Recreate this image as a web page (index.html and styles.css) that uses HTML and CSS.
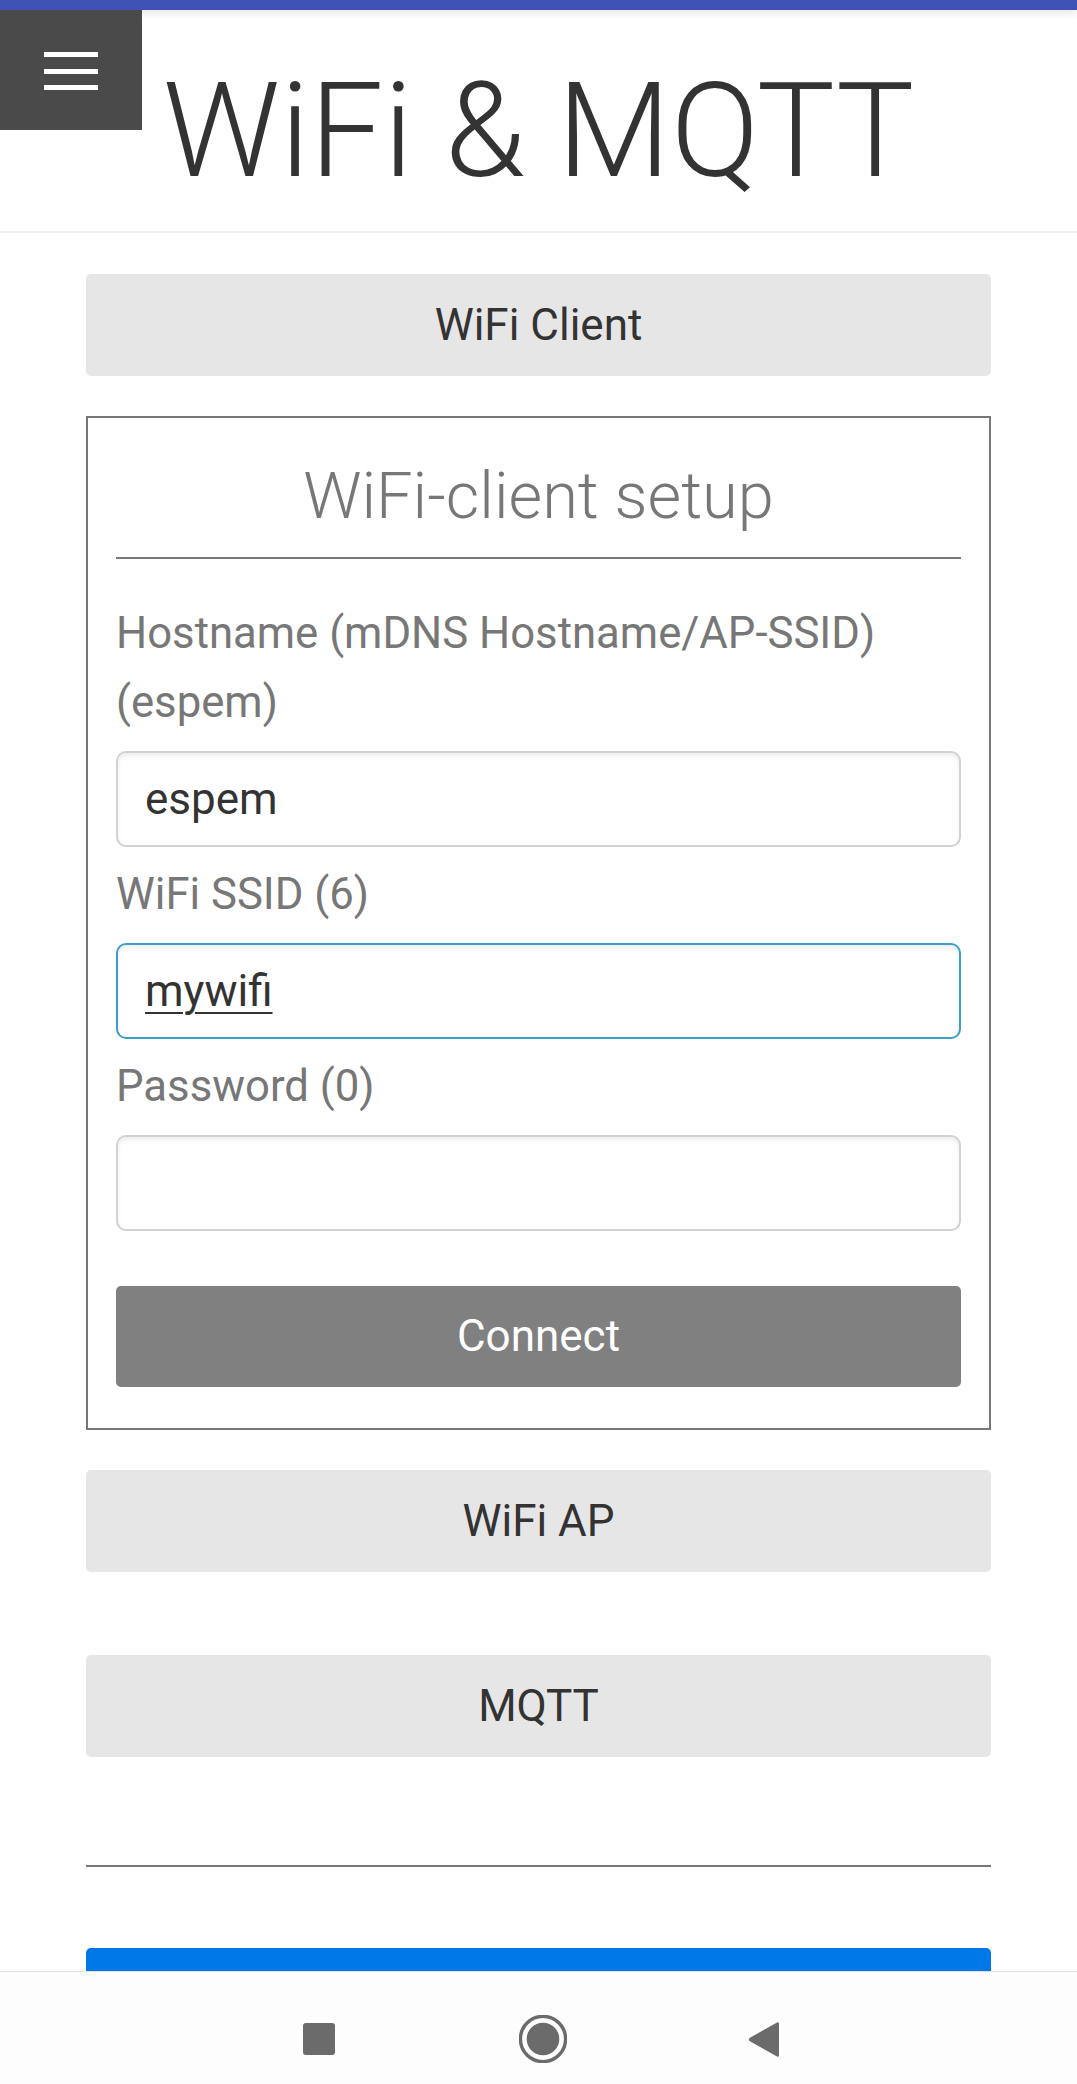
FILE: index.html
```html
<!DOCTYPE html>
<html lang="en">
<head>
<meta charset="utf-8">
<title>WiFi &amp; MQTT</title>
<link rel="stylesheet" href="styles.css">
</head>
<body>
<div class="topbar"></div>
<button class="menu" type="button" aria-label="Menu"><span></span><span></span><span></span></button>
<header class="header">
  <h1 class="title">WiFi &amp; MQTT</h1>
</header>
<main class="content">
  <button class="section-btn first" type="button">WiFi Client</button>
  <form class="panel">
    <h3 class="panel-title">WiFi-client setup</h3>
    <label class="field-label" for="host">Hostname (mDNS Hostname/AP-SSID) (espem)</label>
    <input class="field" id="host" type="text" value="espem">
    <label class="field-label" for="ssid">WiFi SSID (6)</label>
    <input class="field focused" id="ssid" type="text" value="mywifi">
    <label class="field-label" for="pass">Password (0)</label>
    <input class="field" id="pass" type="password" value="">
    <button class="connect" type="button">Connect</button>
  </form>
  <button class="section-btn gap-s" type="button">WiFi AP</button>
  <button class="section-btn gap-l" type="button">MQTT</button>
  <hr class="divider">
  <button class="primary-btn" type="button"></button>
</main>
<nav class="sysnav">
  <svg class="nav-icon" width="48" height="48" viewBox="0 0 48 48"><rect x="8" y="8" width="32" height="32" rx="3" fill="#6b6b6b"/></svg>
  <svg class="nav-icon" width="48" height="48" viewBox="0 0 48 48"><circle cx="24" cy="24" r="22.6" fill="none" stroke="#6b6b6b" stroke-width="3.4"/><circle cx="24" cy="24" r="16.3" fill="#6b6b6b"/></svg>
  <svg class="nav-icon" width="48" height="48" viewBox="0 0 48 48"><path d="M34 7.5 Q36 6.5 36 9 L36 40 Q36 42.5 34 41.5 L6.5 26 Q5 24.5 6.5 23 Z" fill="#6b6b6b"/></svg>
</nav>
</body>
</html>
```

FILE: styles.css
```css
* { box-sizing: border-box; }

html, body {
  margin: 0;
  padding: 0;
  background: #ffffff;
}

body {
  font-family: Roboto, "Liberation Sans", sans-serif;
  color: #333333;
  height: 2084px;
  overflow: hidden;
}

.topbar {
  height: 10px;
  background: #3f51b5;
  box-shadow: 0 3px 8px rgba(0, 0, 0, 0.10);
  position: relative;
  z-index: 2;
}

.menu {
  position: absolute;
  top: 10px;
  left: 0;
  width: 142px;
  height: 120px;
  background: #4a4a4a;
  border: 0;
  margin: 0;
  padding: 42px 0 0 44px;
  display: flex;
  flex-direction: column;
  align-items: flex-start;
  gap: 11.5px;
  z-index: 3;
}

.menu span {
  display: block;
  width: 54px;
  height: 5px;
  background: #ffffff;
}

.header {
  padding: 56px 0 34px;
  border-bottom: 2px solid #eeeeee;
  text-align: center;
}

.title {
  margin: 0;
  font-size: 131px;
  line-height: 131px;
  font-weight: 300;
  color: #333333;
  letter-spacing: 0;
}

.content {
  margin: 0 86px;
  display: flex;
  flex-direction: column;
}

.section-btn {
  display: block;
  width: 100%;
  height: 102px;
  border: 0;
  border-radius: 5px;
  background: #e6e6e6;
  color: #333333;
  font-family: inherit;
  font-size: 44px;
  line-height: 102px;
  padding: 0;
  text-align: center;
}

.section-btn.first { margin-top: 41px; }
.section-btn.gap-s { margin-top: 40px; }
.section-btn.gap-l { margin-top: 83px; }

.panel {
  margin: 40px 0 0;
  border: 2px solid #777777;
  padding: 0 28px 41px;
  display: flex;
  flex-direction: column;
}

.panel-title {
  margin: 46px 0 40px;
  padding-bottom: 28px;
  border-bottom: 2px solid #777777;
  font-size: 65px;
  line-height: 65px;
  font-weight: 300;
  color: #777777;
  text-align: center;
}

.field-label {
  display: block;
  font-size: 43.7px;
  line-height: 69px;
  color: #777777;
  margin-bottom: 14px;
}

.field {
  display: block;
  width: 100%;
  height: 96px;
  margin: 0 0 13px;
  padding: 0 27px;
  border: 2px solid #d2d2d2;
  border-radius: 10px;
  background: #ffffff;
  box-shadow: inset 0 3px 5px rgba(0, 0, 0, 0.07);
  font-family: inherit;
  font-size: 44px;
  color: #333333;
  outline: none;
}

.field.focused {
  border-color: #3a9fca;
  text-decoration: underline;
  text-decoration-thickness: 2px;
  text-underline-offset: 6px;
}

.connect {
  display: block;
  width: 100%;
  height: 101px;
  margin-top: 42px;
  border: 0;
  border-radius: 5px;
  background: #808080;
  color: #ffffff;
  font-family: inherit;
  font-size: 44px;
  line-height: 101px;
  padding: 0;
}

.divider {
  margin: 108px 0 0;
  border: 0;
  height: 2px;
  background: #777777;
}

.primary-btn {
  display: block;
  width: 100%;
  height: 102px;
  margin-top: 81px;
  border: 0;
  border-radius: 5px;
  background: #0077e6;
  padding: 0;
}

.sysnav {
  position: fixed;
  left: 0;
  right: 0;
  bottom: 0;
  height: 113px;
  background: #fdfdfd;
  border-top: 1px solid #e2e2e2;
  display: flex;
  align-items: flex-start;
  gap: 176px;
  padding: 43px 0 0 295px;
  z-index: 5;
}

.nav-icon { display: block; flex: 0 0 auto; }
```
